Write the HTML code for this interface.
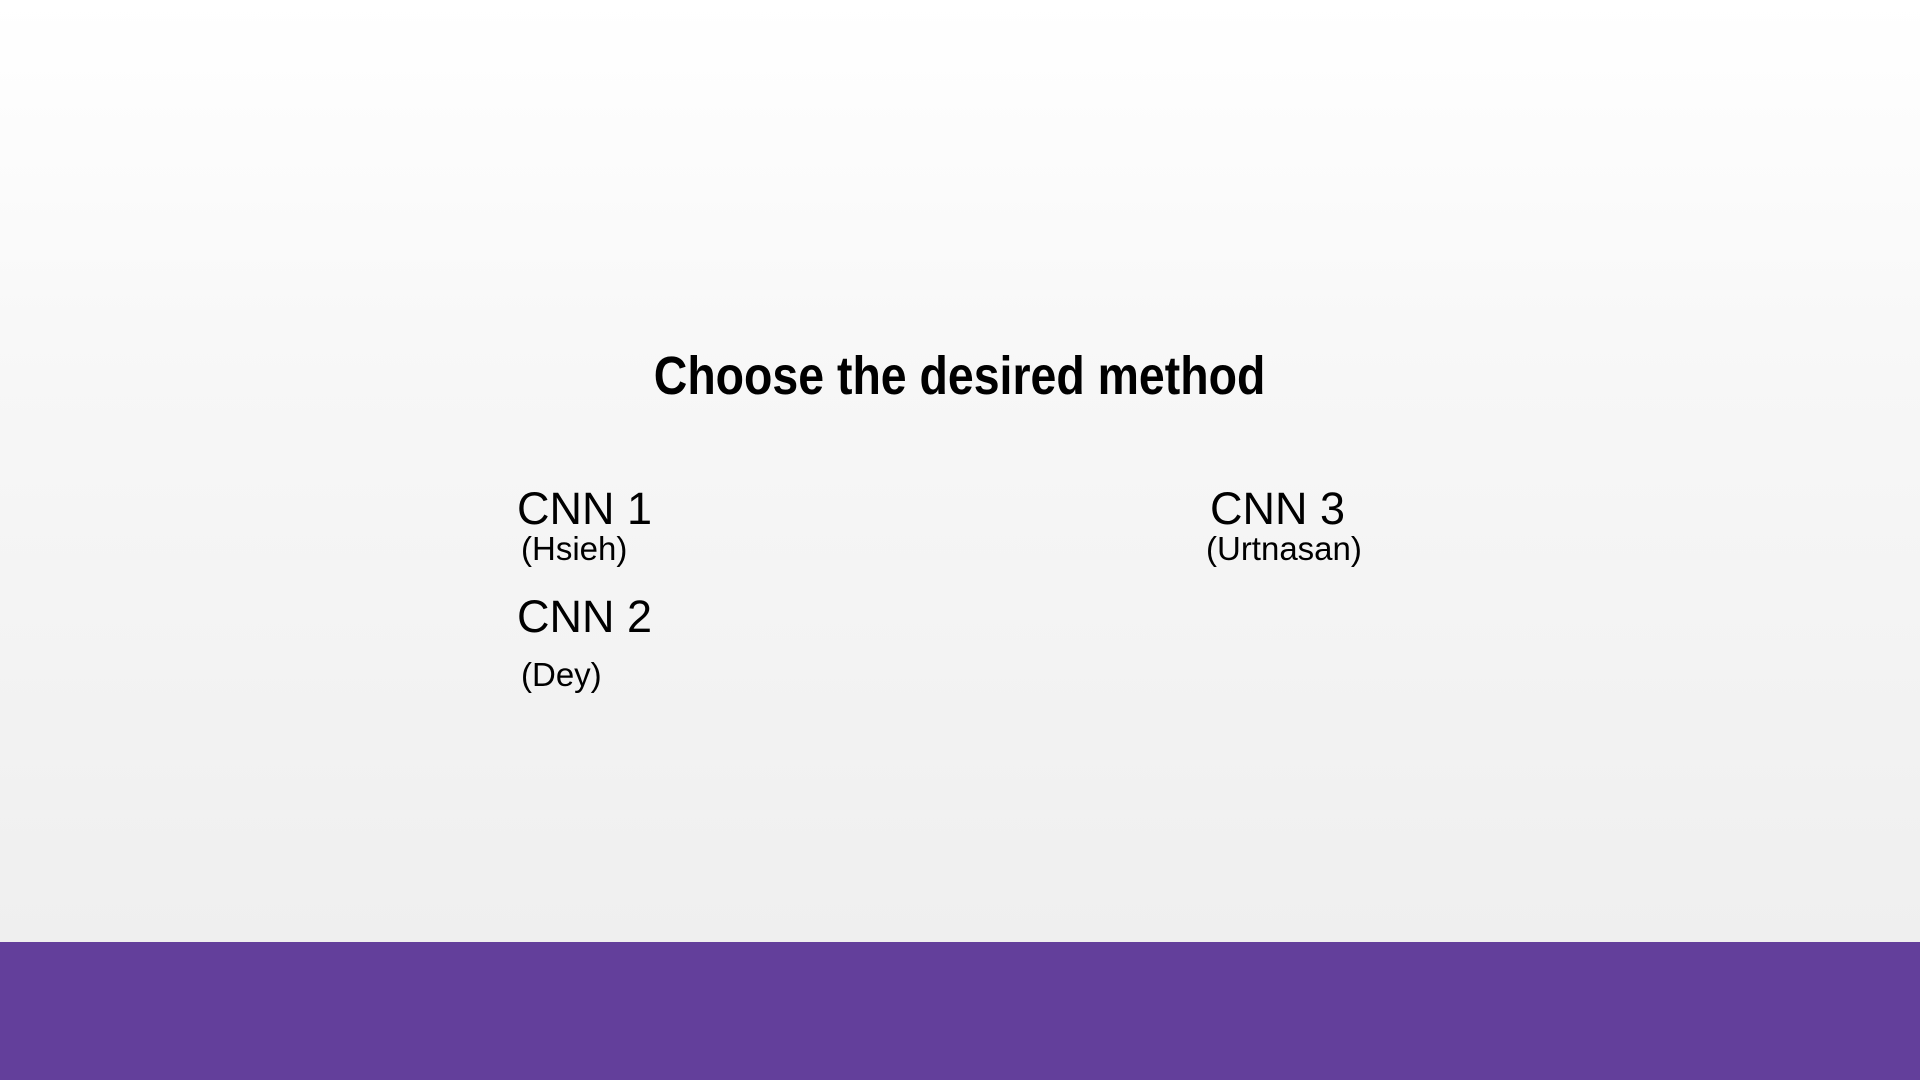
<!DOCTYPE html>
<html><head><meta charset="utf-8"><style>
html,body{margin:0;padding:0;}
body{width:1920px;height:1080px;position:relative;overflow:hidden;font-family:"Liberation Sans",sans-serif;color:#000;
background:linear-gradient(#ffffff 0%,#f7f7f7 35%,#efefef 87%);}
.t{position:absolute;white-space:nowrap;line-height:1;}
.band{position:absolute;left:0;top:942px;width:1920px;height:138px;background:#633f9b;}
</style></head><body>
<div class="t" style="left:0;width:1920px;text-align:center;top:349px;font-size:54px;font-weight:bold;"><span style="display:inline-block;transform:scaleX(0.86);">Choose the desired method</span></div>
<div class="t" style="left:517px;top:486px;font-size:45px;">CNN 1</div>
<div class="t" style="left:521px;top:532px;font-size:33px;">(Hsieh)</div>
<div class="t" style="left:517px;top:594px;font-size:45px;">CNN 2</div>
<div class="t" style="left:521px;top:658px;font-size:33px;">(Dey)</div>
<div class="t" style="left:1210px;top:486px;font-size:45px;">CNN 3</div>
<div class="t" style="left:1206px;top:532px;font-size:33px;">(Urtnasan)</div>
<div class="band"></div>
</body></html>
